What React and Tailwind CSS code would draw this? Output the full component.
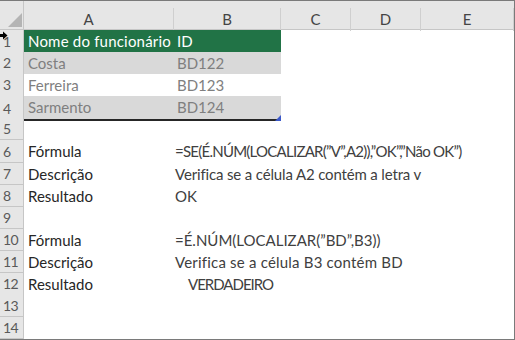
import React from "react"

const font = { fontFamily: 'Lato, "Open Sans", sans-serif' }

const cols = "grid grid-cols-[24px_150px_107px_70px_70px_1fr]"

const rows = [
  { n: 1, kind: "head" },
  { n: 2, kind: "band", a: "Costa", b: "BD122" },
  { n: 3, kind: "plain", a: "Ferreira", b: "BD123" },
  { n: 4, kind: "band", a: "Sarmento", b: "BD124", last: true },
  { n: 5 },
  { n: 6, a: "Fórmula", f: "=SE(É.NÚM(LOCALIZAR(”V”,A2)),”OK”,”Não OK”)", tr: "tracking-[-0.75px]" },
  { n: 7, a: "Descrição", f: "Verifica se a célula A2 contém a letra v", tr: "tracking-[-0.15px]" },
  { n: 8, a: "Resultado", f: "OK" },
  { n: 9 },
  { n: 10, a: "Fórmula", f: "=É.NÚM(LOCALIZAR(”BD”,B3))" },
  { n: 11, a: "Descrição", f: "Verifica se a célula B3 contém BD", tr: "tracking-[0.2px]" },
  { n: 12, a: "Resultado", f: "VERDADEIRO", tr: "tracking-[-1px] pl-[13px]" },
  { n: 13 },
  { n: 14 },
]

function RowNum({ n }) {
  return (
    <div className="h-full bg-[#e6e6e6] border-r border-b border-[#c6c6c6] pl-[3px] flex items-center text-[14px] text-[#595959] tracking-[-0.5px]">
      {n}
    </div>
  )
}

function Row({ r }) {
  if (r.kind === "head") {
    return (
      <div className={`${cols} h-[22.1px]`}>
        <RowNum n={r.n} />
        <div className="col-span-2 bg-[#217346] border-b border-[#1e1e1e] flex items-center text-white text-[15px] whitespace-nowrap">
          <span className="w-[150px] shrink-0 pl-[4px] tracking-[0.2px]">Nome do funcionário</span>
          <span className="pl-[3px]">ID</span>
        </div>
      </div>
    )
  }
  if (r.kind) {
    const bg = r.kind === "band" ? "bg-[#d9d9d9]" : "bg-white"
    return (
      <div className={`${cols} h-[22.1px]`}>
        <RowNum n={r.n} />
        <div className={`col-span-2 relative flex items-center text-[15px] text-[#7f7f7f] ${bg} ${r.last ? "border-b-2 border-[#262626]" : ""}`}>
          <span className="w-[150px] shrink-0 pl-[4px]">{r.a}</span>
          <span className="pl-[3px]">{r.b}</span>
          {r.last && (
            <svg className="absolute right-0 bottom-[-2px]" width="6" height="6" viewBox="0 0 6 6">
              <path d="M6 0 L6 6 L0 6 Z" fill="#3a58c9" />
            </svg>
          )}
        </div>
      </div>
    )
  }
  return (
    <div className={`${cols} h-[22.1px]`}>
      <RowNum n={r.n} />
      <div className="col-span-5 flex items-center text-[15px] text-[#262626]">
        {r.a && <span className="w-[151px] pl-[4px] shrink-0">{r.a}</span>}
        {r.f && <span className={`whitespace-nowrap text-[#404040] ${r.tr || ""}`}>{r.f}</span>}
      </div>
    </div>
  )
}

export default function App() {
  return (
    <div className="w-[515px] h-[340px] bg-white overflow-hidden relative border-t border-r border-b border-[#7a7a7a]" style={font}>
      {/* column headers */}
      <div className={`${cols} h-[29px] bg-[#e6e6e6] border-b border-[#c6c6c6] text-[15px] text-[#444]`}>
        <div className="relative border-r border-[#c6c6c6]">
          <svg className="absolute left-[7px] top-[11px]" width="16" height="16" viewBox="0 0 16 16">
            <path d="M1 15 L15 15 L15 1 Z" fill="#b4b4b4" />
          </svg>
        </div>
        {["A", "B", "C", "D", "E"].map((c) => (
          <div key={c} className="pt-[7px] h-full">
            <div className={`h-full flex items-center justify-center border-r border-[#cfcfcf] ${c === "A" ? "pr-[20px]" : ""}`}>{c}</div>
          </div>
        ))}
      </div>

      {rows.map((r) => (
        <Row key={r.n} r={r} />
      ))}

      {/* mouse cursor at the left edge */}
      <svg className="absolute left-0 top-[30px]" width="8" height="9" viewBox="0 0 8 9">
        <path d="M0 3 L3 3 L3 0.5 L7.5 4.5 L3 8.5 L3 6 L0 6 Z" fill="#000" />
      </svg>
    </div>
  )
}
